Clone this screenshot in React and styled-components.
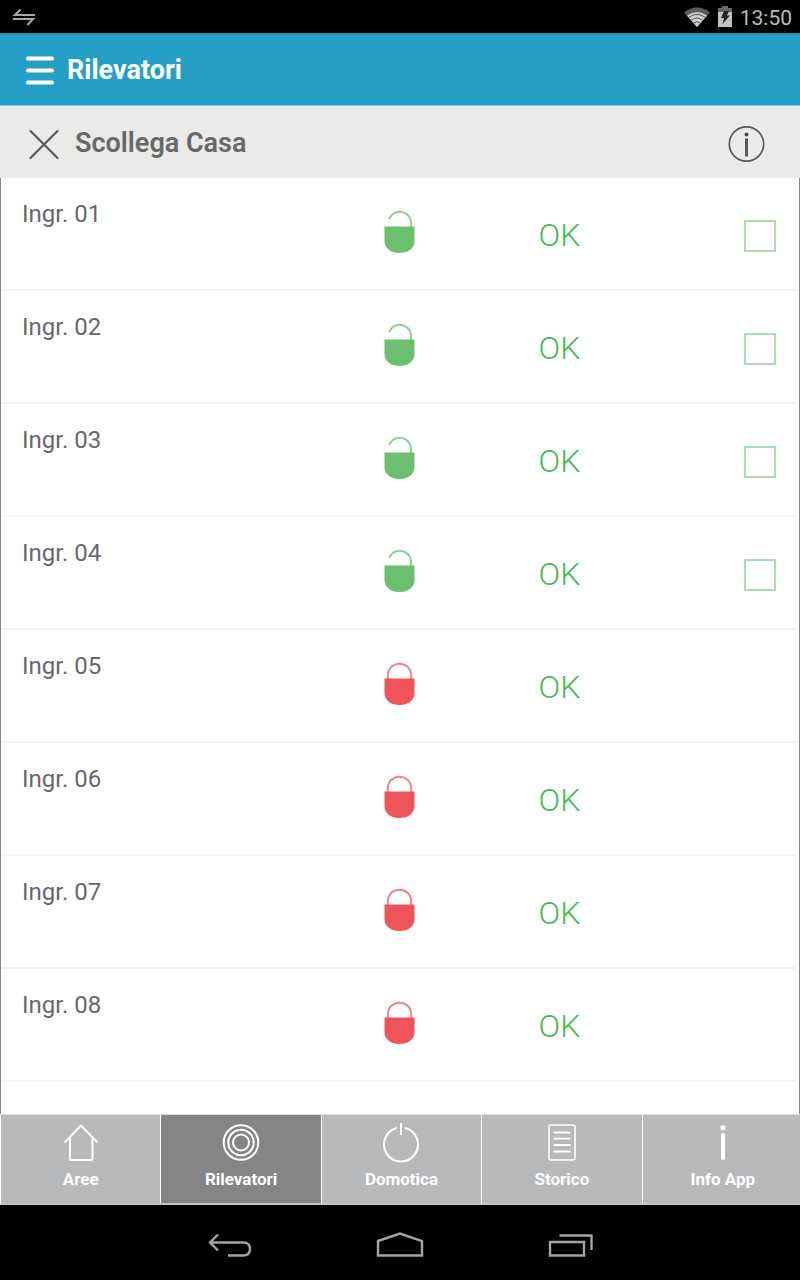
import React, { useState } from 'react';
import styled, { createGlobalStyle } from 'styled-components';

const GlobalStyle = createGlobalStyle`
  * {
    box-sizing: border-box;
  }

  body {
    margin: 0;
    background: #000;
    font-family: Roboto, "Liberation Sans", sans-serif;
  }

  button, input {
    font: inherit;
    margin: 0;
  }
`;

const Screen = styled.div`
  display: flex;
  flex-direction: column;
  min-height: 100vh;
  overflow-x: hidden;
  background: #fff;
`;

// Android status bar
const StatusBar = styled.div`
  display: flex;
  align-items: center;
  justify-content: space-between;
  height: 33px;
  padding: 0 8px 0 12px;
  background: #000;
  color: #bcbcbc;
  font-size: 21px;
  line-height: 32px;
`;

const StatusIcons = styled.div`
  display: flex;
  align-items: center;
  gap: 8px;

  span {
    padding-top: 2px;
  }
`;

const AppBar = styled.header`
  display: flex;
  align-items: center;
  height: 73px;
  padding: 0 24px;
  gap: 11px;
  background: #259fc5;
  border-top: 1px solid #2391b3;
  border-bottom: 1px solid #7fbfd4;
`;

const IconButton = styled.button`
  display: flex;
  padding: 0;
  border: 0;
  background: none;
  cursor: pointer;
`;

const Title = styled.h1`
  margin: 0;
  color: #fff;
  font-size: 27px;
  line-height: 32px;
  font-weight: 700;
`;

const SubHeader = styled.div`
  display: flex;
  align-items: center;
  height: 72px;
  padding: 3px 34px 0 28px;
  gap: 15px;
  background: #eaeae8;
`;

const SubTitle = styled.h2`
  flex: 1;
  margin: 0;
  padding-bottom: 2px;
  color: #67686a;
  font-size: 27px;
  line-height: 32px;
  font-weight: 600;
`;

const SensorList = styled.ul`
  flex: 1;
  margin: 0;
  padding: 0 3px 0 0;
  list-style: none;
  border-left: 1px solid #888;
  border-right: 1px solid #888;
`;

const SensorRow = styled.li`
  display: grid;
  grid-template-columns: 2fr 1fr 1fr 1fr;
  height: 113px;
  border-bottom: 2px solid #f4f4f4;
`;

const SensorName = styled.label`
  padding: 20px 0 0 21px;
  color: #67686a;
  font-size: 24px;
  line-height: 32px;
`;

const Cell = styled.div`
  display: flex;
  align-items: center;
  justify-content: center;
  padding-bottom: 4px;
`;

const StatusCell = styled(Cell)`
  padding: 2px 0 0 4px;
`;

const CheckCell = styled(Cell)`
  justify-content: flex-end;
  padding: 4px 20px 0 0;
`;

const SensorStatus = styled.span`
  color: #43bc4d;
  font-size: 32px;
  line-height: 32px;
  font-weight: 300;
`;

const Checkbox = styled.input`
  appearance: none;
  width: 32px;
  height: 32px;
  border: 2px solid #a9dcae;
  background: #fff;
  cursor: pointer;

  &:checked {
    background: #6bc06f;
  }
`;

// The tabs run slightly past the right edge of the screen
const TabBar = styled.nav`
  display: grid;
  grid-template-columns: repeat(5, 1fr);
  height: 91px;
  margin-right: -3px;
  border-top: 1px solid #dedede;
  border-bottom: 2px solid #c4c4c4;
  border-left: 1px solid #fff;
`;

const Tab = styled.button`
  display: flex;
  flex-direction: column;
  align-items: center;
  padding: 8px 0 0;
  gap: 4px;
  border: 0;
  border-right: ${({ $last }) => ($last ? '0' : '1px solid #fff')};
  background: ${({ $active }) => ($active ? '#858585' : '#b7b9bb')};
  color: #fff;
  font-size: 17px;
  line-height: 24px;
  font-weight: 700;
  cursor: pointer;
`;

const NavBar = styled.div`
  display: flex;
  align-items: center;
  justify-content: center;
  gap: 124px;
  height: 75px;
  padding-top: 4px;
  background: #000;
`;

const SyncIcon = () => (
  <svg width="24" height="20" viewBox="0 0 24 20" fill="none" stroke="#a8a8a8" strokeWidth="2">
    <path d="M23 8H3L8.500 2.500M1 12h20l-5.500 6" />
  </svg>
);

const WifiIcon = () => (
  <svg width="26" height="20" viewBox="0 0 26 20">
    <path d="M0 5.500Q13-4.500 26 5.500L13 20Z" fill="#5c5c5c" />
    <path d="M3 8.500Q13 1.500 23 8.500L13 20Z" fill="#d0d0d0" />
    <path d="M5 10.200Q13 4.500 21 10.200M7.600 13Q13 9.300 18.400 13M10 15.800Q13 13.700 16 15.800" fill="none" stroke="#555" strokeWidth="1" />
  </svg>
);

const BatteryIcon = () => (
  <svg width="14" height="21" viewBox="0 0 14 21">
    <path d="M4 0h6v2h4v4H0V2h4Z" fill="#686868" />
    <path d="M0 6h14v15H0Z" fill="#c2c2c2" />
    <path d="M6 5h5L9 9.500h3L4.500 18l1.500-6H3Z" fill="#222" />
  </svg>
);

const MenuIcon = () => (
  <svg width="32" height="32" viewBox="0 0 32 32" stroke="#fff" strokeWidth="4" strokeLinecap="round">
    <path d="M4 4.500h24M4 16.500h24M4 28.500h24" />
  </svg>
);

const CloseIcon = () => (
  <svg width="32" height="32" viewBox="0 0 32 32" stroke="#58595b" strokeWidth="2.200" strokeLinecap="round">
    <path d="M2.500 3l27 27M29.500 3l-27 27" />
  </svg>
);

const InfoIcon = () => (
  <svg width="38" height="38" viewBox="0 0 38 38" fill="none" stroke="#58595b">
    <circle cx="18.500" cy="19" r="17.200" strokeWidth="1.700" />
    <circle cx="18.500" cy="9.500" r="2" fill="#4a4a4c" stroke="none" />
    <path d="M18.500 13.500v18" strokeWidth="3" />
  </svg>
);

const LockIcon = ({ open }) => (
  <svg width="32" height="44" viewBox="0 0 32 44">
    <path
      d={open ? 'M6 9C8.500 4 12 1.800 16.500 1.800C23 1.800 28 7 28 12.500V18' : 'M4.800 18V13.500C4.800 6.500 10 1.800 16.500 1.800S28.200 6.500 28.200 13.500V18'}
      fill="none"
      stroke={open ? '#90d094' : '#f58287'}
      strokeWidth="2"
    />
    <path d="M1.500 16.500h30V31C31.500 38.500 25 43 16.500 43S1.500 38.500 1.500 31Z" fill={open ? '#6bc06f' : '#f0545b'} />
  </svg>
);

const tabIconProps = {
  width: 40,
  height: 40,
  viewBox: '0 0 40 40',
  fill: 'none',
  stroke: '#fff',
  strokeWidth: 2,
};

const HomeIcon = () => (
  <svg {...tabIconProps}>
    <path d="M3.500 19.500L20 2.500l16.500 17M9 15v21q0 1 1 1h20.500q1 0 1-1V15" />
  </svg>
);

const SensorIcon = () => (
  <svg {...tabIconProps}>
    <circle cx="20" cy="19.500" r="17.300" />
    <circle cx="20" cy="19.500" r="12.700" />
    <circle cx="20" cy="19.500" r="8" />
  </svg>
);

const PowerIcon = () => (
  <svg {...tabIconProps}>
    <path d="M24 5a17 17 0 1 1-8 0M20 0v12" />
  </svg>
);

const HistoryIcon = () => (
  <svg {...tabIconProps} strokeWidth="1.600">
    <rect x="7" y="2" width="26" height="35" rx="2" />
    <path d="M11.500 9.500h17M11.500 15.700h17M11.500 22h17M11.500 28.500h17" strokeWidth="1.800" />
  </svg>
);

const InfoAppIcon = () => (
  <svg {...tabIconProps} strokeWidth="4" strokeLinecap="round">
    <circle cx="20" cy="4.800" r="2.500" fill="#fff" stroke="none" />
    <path d="M20 12v23" />
  </svg>
);

const navIconProps = {
  height: 28,
  fill: 'none',
  stroke: '#a4a4a4',
  strokeWidth: 2.4,
};

const BackIcon = () => (
  <svg {...navIconProps} width="46" viewBox="0 0 46 28">
    <path d="M12 3.500L4 11.500l8 8M4 11.500h33q7 0 7 6.500t-7 6.500H22" />
  </svg>
);

const NavHomeIcon = () => (
  <svg {...navIconProps} width="48" viewBox="0 0 48 28">
    <path d="M2 10L24 2.500 46 10v14.500H2Z" />
  </svg>
);

const RecentIcon = () => (
  <svg {...navIconProps} width="46" viewBox="0 0 46 28">
    <path d="M2 11h34v13.500H2ZM11.500 4.500h32V19" />
  </svg>
);

const sensors = [
  { id: 1, name: 'Ingr. 01', open: true },
  { id: 2, name: 'Ingr. 02', open: true },
  { id: 3, name: 'Ingr. 03', open: true },
  { id: 4, name: 'Ingr. 04', open: true },
  { id: 5, name: 'Ingr. 05', open: false },
  { id: 6, name: 'Ingr. 06', open: false },
  { id: 7, name: 'Ingr. 07', open: false },
  { id: 8, name: 'Ingr. 08', open: false },
];

const tabs = [
  { label: 'Aree', Icon: HomeIcon },
  { label: 'Rilevatori', Icon: SensorIcon },
  { label: 'Domotica', Icon: PowerIcon },
  { label: 'Storico', Icon: HistoryIcon },
  { label: 'Info App', Icon: InfoAppIcon },
];

const App = () => {
  const [activeTab, setActiveTab] = useState('Rilevatori');

  return (
    <>
      <GlobalStyle />
      <Screen>
        <StatusBar>
          <SyncIcon />
          <StatusIcons>
            <WifiIcon />
            <BatteryIcon />
            <span>13:50</span>
          </StatusIcons>
        </StatusBar>

        <AppBar>
          <IconButton aria-label="Menu"><MenuIcon /></IconButton>
          <Title>Rilevatori</Title>
        </AppBar>

        <SubHeader>
          <IconButton aria-label="Chiudi"><CloseIcon /></IconButton>
          <SubTitle>Scollega Casa</SubTitle>
          <IconButton aria-label="Informazioni"><InfoIcon /></IconButton>
        </SubHeader>

        <SensorList>
          {sensors.map(({ id, name, open }) => (
            <SensorRow key={id}>
              <SensorName as={open ? 'label' : 'span'} htmlFor={open ? `sensor-${id}` : undefined}>
                {name}
              </SensorName>
              <Cell><LockIcon open={open} /></Cell>
              <StatusCell><SensorStatus>OK</SensorStatus></StatusCell>
              <CheckCell>
                {open && <Checkbox type="checkbox" id={`sensor-${id}`} />}
              </CheckCell>
            </SensorRow>
          ))}
        </SensorList>

        <TabBar>
          {tabs.map(({ label, Icon }, i) => (
            <Tab
              key={label}
              $active={label === activeTab}
              $last={i === tabs.length - 1}
              onClick={() => setActiveTab(label)}
            >
              <Icon />
              {label}
            </Tab>
          ))}
        </TabBar>

        <NavBar>
          <IconButton aria-label="Indietro"><BackIcon /></IconButton>
          <IconButton aria-label="Home"><NavHomeIcon /></IconButton>
          <IconButton aria-label="Recenti"><RecentIcon /></IconButton>
        </NavBar>
      </Screen>
    </>
  );
};

export default App;
